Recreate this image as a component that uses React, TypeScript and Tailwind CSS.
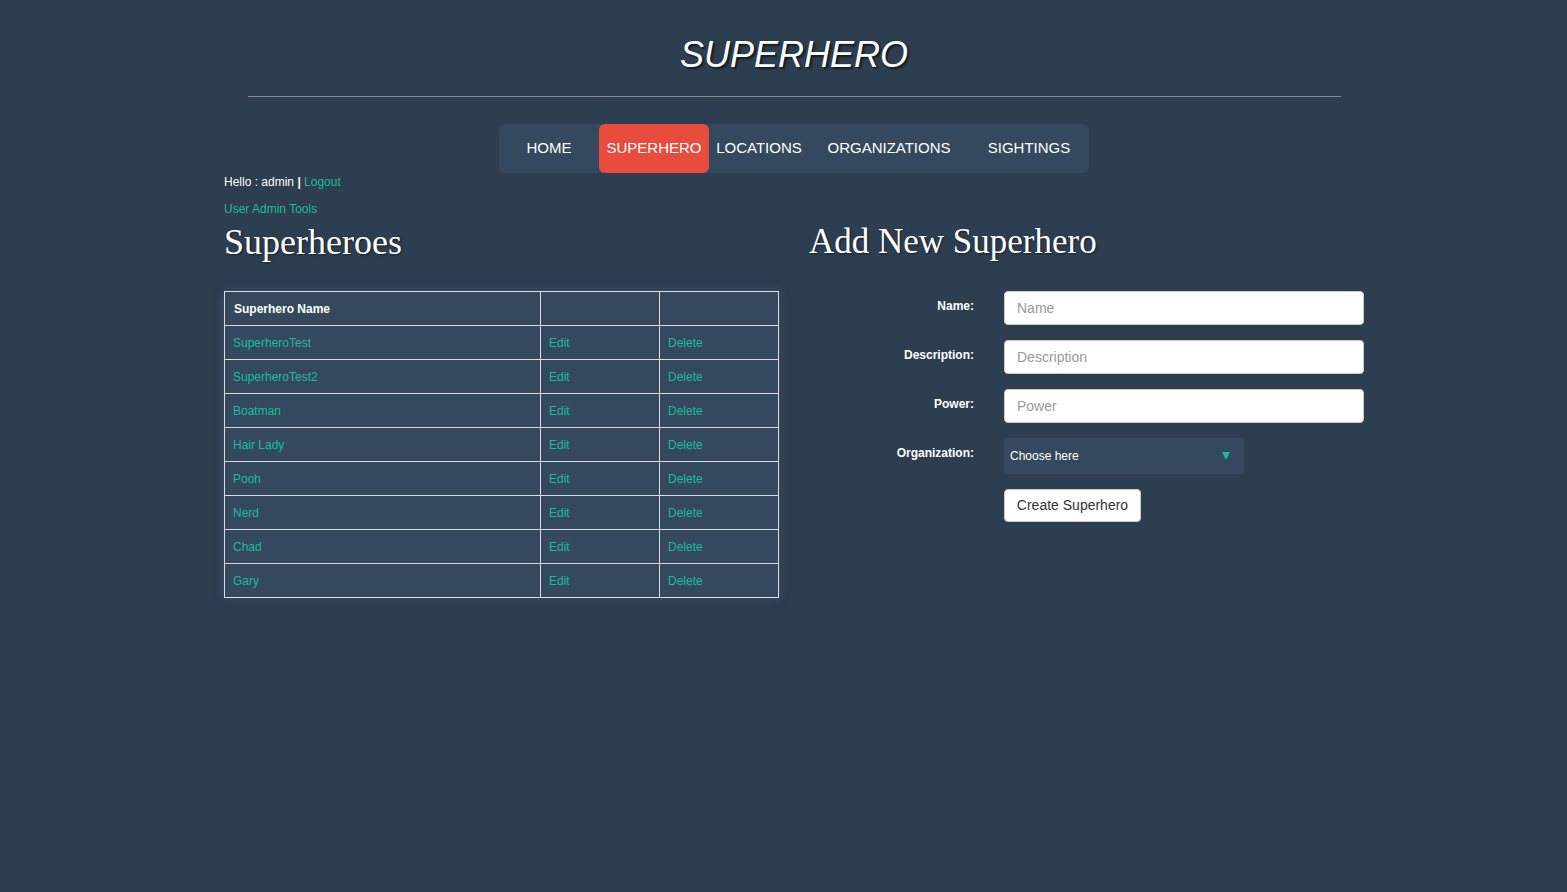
import React from "react";

const heroes = [
  "SuperheroTest",
  "SuperheroTest2",
  "Boatman",
  "Hair Lady",
  "Pooh",
  "Nerd",
  "Chad",
  "Gary",
];

const navItems = [
  { label: "HOME", w: "w-[100px]" },
  { label: "SUPERHERO", w: "w-[110px]", active: true },
  { label: "LOCATIONS", w: "w-[100px]" },
  { label: "ORGANIZATIONS", w: "w-[160px]" },
  { label: "SIGHTINGS", w: "w-[120px]" },
];

const fields = ["Name", "Description", "Power"];

export default function App() {
  return (
    <div className="min-h-[892px] bg-[#2c3e50] pl-[21px] font-['Liberation_Sans',Arial,sans-serif] text-white">
      <div className="mx-auto w-[1140px]">
        <h1 className="pt-[35px] text-center text-[36px] leading-[40px] italic [text-shadow:2px_2px_2px_rgba(0,0,0,0.55)]">
          SUPERHERO
        </h1>
        <div className="mx-auto mt-[21px] h-px w-[1093px] bg-[#8a8a8a]" />

        <nav className="mx-auto mt-[27px] flex h-[49px] w-[590px] rounded-[6px] bg-[#34495e]">
          {navItems.map((n) => (
            <a
              key={n.label}
              href="#"
              className={`${n.w} flex items-center justify-center rounded-[6px] text-[15px] ${
                n.active ? "bg-[#e74c3c]" : ""
              }`}
            >
              {n.label}
            </a>
          ))}
        </nav>

        <div className="mt-px text-[12px] leading-[17px]">
          Hello : admin <b>|</b> <a href="#" className="text-[#1abc9c]">Logout</a>
        </div>
        <div className="mt-[10px] text-[12px] leading-[17px]">
          <a href="#" className="text-[#1abc9c]">User Admin Tools</a>
        </div>

        <div className="mt-[5px] flex">
          <section className="w-[585px]">
            <h2 className="font-['Liberation_Serif',Georgia,serif] text-[36px] leading-[38px] [text-shadow:1px_1px_2px_rgba(0,0,0,0.5)]">
              Superheroes
            </h2>
            <table className="mt-[30px] w-[555px] border-collapse bg-[#34495e] text-[12px] shadow-[0_0_8px_rgba(60,85,110,0.9)]">
              <thead>
                <tr className="h-[34px]">
                  <th className="w-[316px] border border-[#dddddd] px-[9px] text-left font-bold">
                    Superhero Name
                  </th>
                  <th className="w-[119px] border border-[#dddddd]" />
                  <th className="border border-[#dddddd]" />
                </tr>
              </thead>
              <tbody>
                {heroes.map((h) => (
                  <tr key={h} className="h-[34px] text-[#1abc9c]">
                    <td className="border border-[#dddddd] px-[8px]">
                      <a href="#">{h}</a>
                    </td>
                    <td className="border border-[#dddddd] px-[8px]">
                      <a href="#">Edit</a>
                    </td>
                    <td className="border border-[#dddddd] px-[8px]">
                      <a href="#">Delete</a>
                    </td>
                  </tr>
                ))}
              </tbody>
            </table>
          </section>

          <section className="w-[555px]">
            <h2 className="font-['Liberation_Serif',Georgia,serif] text-[35px] leading-[38px] [text-shadow:1px_1px_2px_rgba(0,0,0,0.5)]">
              Add New Superhero
            </h2>
            <form className="mt-[30px] flex flex-col gap-[15px]">
              {fields.map((f) => (
                <div key={f} className="flex">
                  <label className="w-[165px] pt-[7px] text-right text-[12px] leading-[17px] font-bold">
                    {f}:
                  </label>
                  <input
                    placeholder={f}
                    className="ml-[30px] h-[34px] w-[360px] rounded-[4px] border border-[#cccccc] bg-white px-[12px] text-[14px] text-[#555] placeholder:text-[#999]"
                  />
                </div>
              ))}
              <div className="flex">
                <label className="w-[165px] pt-[7px] text-right text-[12px] leading-[17px] font-bold">
                  Organization:
                </label>
                <div className="ml-[30px] flex h-[36px] w-[240px] items-center justify-between rounded-[3px] bg-[#34495e] pr-[14px] pl-[6px] text-[12px]">
                  <span>Choose here</span>
                  <span className="h-0 w-0 border-x-[4px] border-t-[8px] border-x-transparent border-t-[#1abc9c]" />
                </div>
              </div>
              <div className="flex">
                <button
                  type="button"
                  className="ml-[195px] h-[33px] w-[137px] rounded-[4px] border border-[#cccccc] bg-white text-[14px] text-[#333]"
                >
                  Create Superhero
                </button>
              </div>
            </form>
          </section>
        </div>
      </div>
    </div>
  );
}
